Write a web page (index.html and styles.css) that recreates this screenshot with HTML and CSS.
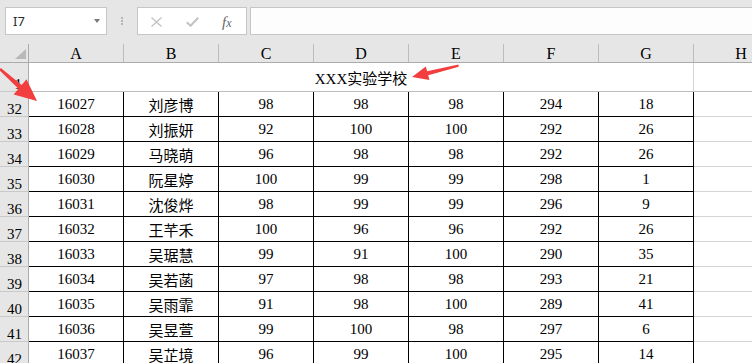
FILE: index.html
```html
<!DOCTYPE html>
<html lang="zh">
<head>
<meta charset="utf-8">
<title>Sheet</title>
<link rel="stylesheet" href="styles.css">
</head>
<body>
<div class="app">
  <div class="toolbar">
    <div class="namebox"><span class="name">I7</span><span class="caret"></span></div>
    <div class="sep"><i></i><i></i><i></i></div>
    <div class="fxbox">
      <svg class="ico-x" width="11" height="10" viewBox="0 0 11 10"><path d="M0.5 0.5 L10.5 9.5 M10.5 0.5 L0.5 9.5" stroke="#c2c2c2" stroke-width="1.3" fill="none"/></svg>
      <svg class="ico-ok" width="13" height="10" viewBox="0 0 13 10"><path d="M0.8 5.2 L4.6 8.8 L12.2 0.8" stroke="#c2c2c2" stroke-width="2" fill="none"/></svg>
      <span class="fx">f<span class="fx-x">x</span></span>
    </div>
    <div class="formula"></div>
  </div>

  <div class="sheet">
    <div class="corner"><span class="tri"></span></div>
    <div class="ch">A</div><div class="ch">B</div><div class="ch">C</div><div class="ch">D</div><div class="ch">E</div><div class="ch">F</div><div class="ch">G</div><div class="ch">H</div>

    <div class="rh">1</div>
    <div class="title">XXX实验学校</div>
    <div class="g g-title"></div>

    <div class="rh">32</div><div class="c">16027</div><div class="c">刘彦博</div><div class="c">98</div><div class="c">98</div><div class="c">98</div><div class="c">294</div><div class="c">18</div><div class="g"></div>
    <div class="rh">33</div><div class="c">16028</div><div class="c">刘振妍</div><div class="c">92</div><div class="c">100</div><div class="c">100</div><div class="c">292</div><div class="c">26</div><div class="g"></div>
    <div class="rh">34</div><div class="c">16029</div><div class="c">马晓萌</div><div class="c">96</div><div class="c">98</div><div class="c">98</div><div class="c">292</div><div class="c">26</div><div class="g"></div>
    <div class="rh">35</div><div class="c">16030</div><div class="c">阮星婷</div><div class="c">100</div><div class="c">99</div><div class="c">99</div><div class="c">298</div><div class="c">1</div><div class="g"></div>
    <div class="rh">36</div><div class="c">16031</div><div class="c">沈俊烨</div><div class="c">98</div><div class="c">99</div><div class="c">99</div><div class="c">296</div><div class="c">9</div><div class="g"></div>
    <div class="rh">37</div><div class="c">16032</div><div class="c">王芊禾</div><div class="c">100</div><div class="c">96</div><div class="c">96</div><div class="c">292</div><div class="c">26</div><div class="g"></div>
    <div class="rh">38</div><div class="c">16033</div><div class="c">吴琚慧</div><div class="c">99</div><div class="c">91</div><div class="c">100</div><div class="c">290</div><div class="c">35</div><div class="g"></div>
    <div class="rh">39</div><div class="c">16034</div><div class="c">吴若菡</div><div class="c">97</div><div class="c">98</div><div class="c">98</div><div class="c">293</div><div class="c">21</div><div class="g"></div>
    <div class="rh">40</div><div class="c">16035</div><div class="c">吴雨霏</div><div class="c">91</div><div class="c">98</div><div class="c">100</div><div class="c">289</div><div class="c">41</div><div class="g"></div>
    <div class="rh">41</div><div class="c">16036</div><div class="c">吴昱萱</div><div class="c">99</div><div class="c">100</div><div class="c">98</div><div class="c">297</div><div class="c">6</div><div class="g"></div>
    <div class="rh">42</div><div class="c">16037</div><div class="c">吴芷境</div><div class="c">96</div><div class="c">99</div><div class="c">100</div><div class="c">295</div><div class="c">14</div><div class="g"></div>
  </div>

  <svg class="arrows" width="752" height="363" viewBox="0 0 752 363">
    <polygon fill="#f23e3e" points="0.8,68 21.7,85 26.5,79.2 37,101 13.7,94.6 18.5,88.8 -0.8,70"/>
    <polygon fill="#f23e3e" points="458.4,64.4 427.1,71.3 425.8,66.6 412,77 429.5,80 428.2,75.3 458.8,66.8"/>
  </svg>
</div>
</body>
</html>
```

FILE: styles.css
```css
html, body {
  margin: 0;
  padding: 0;
  background: #ffffff;
}

.app {
  position: relative;
  width: 752px;
  height: 363px;
  overflow: hidden;
  background: #e6e6e6;
}

/* ---------- formula bar ---------- */
.toolbar {
  display: flex;
  align-items: flex-start;
  height: 44px;
  box-sizing: border-box;
  padding: 7px 0 0 5px;
}

.namebox {
  width: 102px;
  height: 28px;
  box-sizing: border-box;
  border: 1px solid #c6c6c6;
  background: #ffffff;
  display: flex;
  align-items: center;
  justify-content: space-between;
  padding: 0 6px 0 7px;
}

.name {
  font-family: "Noto Sans", "Open Sans", sans-serif;
  font-size: 13px;
  color: #2a2a2a;
  line-height: 14px;
}

.caret {
  width: 0;
  height: 0;
  border-left: 3.5px solid transparent;
  border-right: 3.5px solid transparent;
  border-top: 4px solid #7a7a7a;
  margin-top: -1px;
}

.sep {
  width: 30px;
  display: flex;
  flex-direction: column;
  align-items: center;
  padding-top: 10px;
  gap: 1px;
}

.sep i {
  display: block;
  width: 2px;
  height: 2px;
  background: #b4b4b4;
}

.fxbox {
  width: 110px;
  height: 28px;
  box-sizing: border-box;
  border: 1px solid #c6c6c6;
  background: #ffffff;
  display: flex;
  align-items: center;
  padding: 2px 0 0 13px;
}

.ico-x {
  display: block;
}

.ico-ok {
  display: block;
  margin-left: 24px;
}

.fx {
  margin-left: 23px;
  font-family: "Liberation Serif", serif;
  font-style: italic;
  font-size: 15px;
  color: #666666;
  line-height: 14px;
}

.fx-x {
  font-size: 12px;
}

.formula {
  flex: 1;
  height: 28px;
  box-sizing: border-box;
  margin-left: 3px;
  margin-right: -4px;
  border: 1px solid #c6c6c6;
  background: #fdfdfd;
}

/* ---------- sheet grid ---------- */
.sheet {
  display: grid;
  grid-template-columns: 29px repeat(8, 95px);
  grid-template-rows: 19px 29px repeat(11, 25px);
  background: #ffffff;
  font-family: "Liberation Serif", "Noto Sans CJK SC", serif;
  font-size: 15px;
  color: #000000;
}

.sheet > div {
  box-sizing: border-box;
  min-width: 0;
}

.corner {
  background: #e6e6e6;
  border-right: 1px solid #ababab;
  border-bottom: 1px solid #ababab;
  display: flex;
  justify-content: flex-end;
  align-items: flex-end;
  padding: 0 2px 3px 0;
}

.tri {
  width: 0;
  height: 0;
  border-left: 11px solid transparent;
  border-bottom: 10px solid #b9b9b9;
}

.ch {
  background: #e6e6e6;
  border-right: 1px solid #bcbcbc;
  border-bottom: 1px solid #ababab;
  text-align: center;
  font-size: 16px;
  line-height: 18px;
  padding-top: 1px;
}

.rh {
  background: #e6e6e6;
  border-right: 1px solid #ababab;
  border-bottom: 1px solid #c9c9c9;
  display: flex;
  justify-content: flex-end;
  align-items: flex-end;
  padding-right: 6px;
  line-height: 14px;
  font-size: 15px;
}

.title {
  grid-column: 2 / 9;
  border-right: 1px solid #d4d4d4;
  border-bottom: 1px solid #bdbdbd;
  display: flex;
  align-items: center;
  justify-content: center;
  padding-top: 1px;
}

.c {
  border-right: 1px solid #000000;
  border-bottom: 1px solid #000000;
  display: flex;
  align-items: center;
  justify-content: center;
}

.g {
  border-right: 1px solid #d4d4d4;
  border-bottom: 1px solid #d4d4d4;
}

.g-title {
  border-bottom-color: #bdbdbd;
}

/* ---------- annotation arrows ---------- */
.arrows {
  position: absolute;
  left: 0;
  top: 0;
  pointer-events: none;
}
```
